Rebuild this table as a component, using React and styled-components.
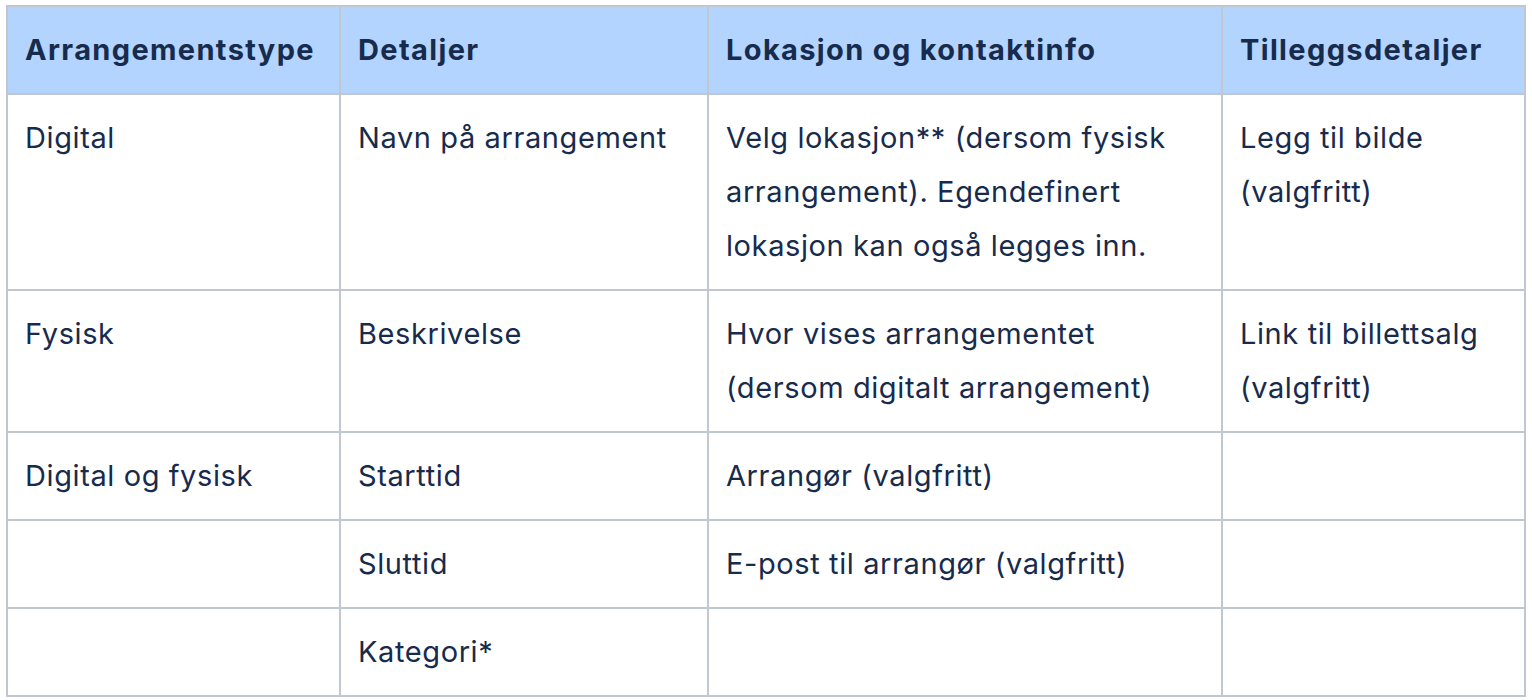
import React from 'react';
import styled, { createGlobalStyle } from 'styled-components';

const GlobalStyle = createGlobalStyle`
  html, body {
    margin: 0;
    padding: 0;
    background: #ffffff;
  }
  body {
    font-family: Inter, "Noto Sans", "Liberation Sans", sans-serif;
    color: #172b4d;
  }
`;

const Page = styled.div`
  padding: 5px 6px;
`;

const Table = styled.table`
  width: 1520px;
  border-collapse: collapse;
  table-layout: fixed;
`;

const HeadCell = styled.th`
  background: #b3d4ff;
  border: 2px solid #c1c7d0;
  padding: 16px 17px;
  height: 54px;
  font-size: 29px;
  line-height: 54px;
  font-weight: 700;
  letter-spacing: 1.35px;
  text-align: left;
  vertical-align: top;
  color: #172b4d;
  white-space: nowrap;
`;

const Cell = styled.td`
  border: 2px solid #c1c7d0;
  padding: 16px 17px;
  font-size: 29px;
  line-height: 54px;
  font-weight: 400;
  letter-spacing: 0.6px;
  vertical-align: top;
  color: #172b4d;
  height: 54px;
`;

const columns = [
  { title: 'Arrangementstype', width: 333 },
  { title: 'Detaljer', width: 368 },
  { title: 'Lokasjon og kontaktinfo', width: 514 },
  { title: 'Tilleggsdetaljer', width: 303 },
];

const rows = [
  [
    'Digital',
    'Navn på arrangement',
    'Velg lokasjon** (dersom fysisk arrangement). Egendefinert lokasjon kan også legges inn.',
    'Legg til bilde (valgfritt)',
  ],
  [
    'Fysisk',
    'Beskrivelse',
    'Hvor vises arrangementet (dersom digitalt arrangement)',
    'Link til billettsalg (valgfritt)',
  ],
  ['Digital og fysisk', 'Starttid', 'Arrangør (valgfritt)', ''],
  ['', 'Sluttid', 'E-post til arrangør (valgfritt)', ''],
  ['', 'Kategori*', '', ''],
];

const App = () => {
  return (
    <Page>
      <GlobalStyle />
      <Table>
        <colgroup>
          {columns.map(col => (
            <col key={col.title} style={{ width: col.width }} />
          ))}
        </colgroup>
        <thead>
          <tr>
            {columns.map(col => (
              <HeadCell key={col.title}>{col.title}</HeadCell>
            ))}
          </tr>
        </thead>
        <tbody>
          {rows.map((row, i) => (
            <tr key={i}>
              {row.map((text, j) => (
                <Cell key={j}>{text}</Cell>
              ))}
            </tr>
          ))}
        </tbody>
      </Table>
    </Page>
  );
};

export default App;
